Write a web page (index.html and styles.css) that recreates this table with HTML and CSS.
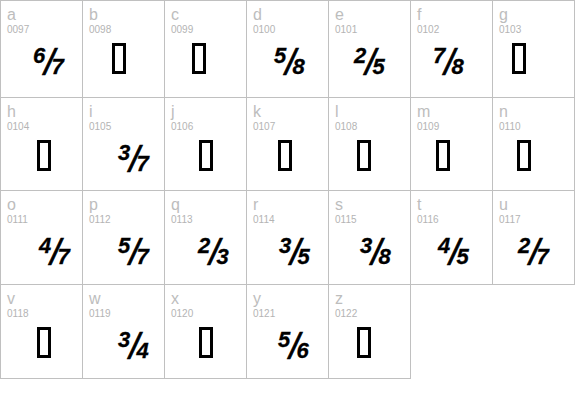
FILE: index.html
```html
<!DOCTYPE html>
<html>
<head>
<meta charset="utf-8">
<link rel="stylesheet" href="styles.css">
</head>
<body>
<div class="chart">
  <div class="cell"><div class="ch">a</div><div class="code">0097</div><div class="glyph x32"><span class="frac"><span class="n">6</span><span class="sl">/</span><span class="d">7</span></span></div></div>
  <div class="cell"><div class="ch">b</div><div class="code">0098</div><div class="glyph x29"><span class="nd"></span></div></div>
  <div class="cell"><div class="ch">c</div><div class="code">0099</div><div class="glyph x27"><span class="nd"></span></div></div>
  <div class="cell"><div class="ch">d</div><div class="code">0100</div><div class="glyph x27"><span class="frac"><span class="n">5</span><span class="sl">/</span><span class="d">8</span></span></div></div>
  <div class="cell"><div class="ch">e</div><div class="code">0101</div><div class="glyph x25"><span class="frac"><span class="n">2</span><span class="sl">/</span><span class="d">5</span></span></div></div>
  <div class="cell"><div class="ch">f</div><div class="code">0102</div><div class="glyph x22"><span class="frac"><span class="n">7</span><span class="sl">/</span><span class="d">8</span></span></div></div>
  <div class="cell"><div class="ch">g</div><div class="code">0103</div><div class="glyph x19"><span class="nd"></span></div></div>

  <div class="cell"><div class="ch">h</div><div class="code">0104</div><div class="glyph x36"><span class="nd"></span></div></div>
  <div class="cell"><div class="ch">i</div><div class="code">0105</div><div class="glyph x35"><span class="frac"><span class="n">3</span><span class="sl">/</span><span class="d">7</span></span></div></div>
  <div class="cell"><div class="ch">j</div><div class="code">0106</div><div class="glyph x34"><span class="nd"></span></div></div>
  <div class="cell"><div class="ch">k</div><div class="code">0107</div><div class="glyph x31"><span class="nd"></span></div></div>
  <div class="cell"><div class="ch">l</div><div class="code">0108</div><div class="glyph x28"><span class="nd"></span></div></div>
  <div class="cell"><div class="ch">m</div><div class="code">0109</div><div class="glyph x25"><span class="nd"></span></div></div>
  <div class="cell"><div class="ch">n</div><div class="code">0110</div><div class="glyph x24"><span class="nd"></span></div></div>

  <div class="cell"><div class="ch">o</div><div class="code">0111</div><div class="glyph x38"><span class="frac"><span class="n">4</span><span class="sl">/</span><span class="d">7</span></span></div></div>
  <div class="cell"><div class="ch">p</div><div class="code">0112</div><div class="glyph x35"><span class="frac"><span class="n">5</span><span class="sl">/</span><span class="d">7</span></span></div></div>
  <div class="cell"><div class="ch">q</div><div class="code">0113</div><div class="glyph x33"><span class="frac"><span class="n">2</span><span class="sl">/</span><span class="d">3</span></span></div></div>
  <div class="cell"><div class="ch">r</div><div class="code">0114</div><div class="glyph x32"><span class="frac"><span class="n">3</span><span class="sl">/</span><span class="d">5</span></span></div></div>
  <div class="cell"><div class="ch">s</div><div class="code">0115</div><div class="glyph x31"><span class="frac"><span class="n">3</span><span class="sl">/</span><span class="d">8</span></span></div></div>
  <div class="cell"><div class="ch">t</div><div class="code">0116</div><div class="glyph x27"><span class="frac"><span class="n">4</span><span class="sl">/</span><span class="d">5</span></span></div></div>
  <div class="cell"><div class="ch">u</div><div class="code">0117</div><div class="glyph x25"><span class="frac"><span class="n">2</span><span class="sl">/</span><span class="d">7</span></span></div></div>

  <div class="cell"><div class="ch">v</div><div class="code">0118</div><div class="glyph x36"><span class="nd"></span></div></div>
  <div class="cell"><div class="ch">w</div><div class="code">0119</div><div class="glyph x35"><span class="frac"><span class="n">3</span><span class="sl">/</span><span class="d">4</span></span></div></div>
  <div class="cell"><div class="ch">x</div><div class="code">0120</div><div class="glyph x34"><span class="nd"></span></div></div>
  <div class="cell"><div class="ch">y</div><div class="code">0121</div><div class="glyph x31"><span class="frac"><span class="n">5</span><span class="sl">/</span><span class="d">6</span></span></div></div>
  <div class="cell"><div class="ch">z</div><div class="code">0122</div><div class="glyph x28"><span class="nd"></span></div></div>
</div>
</body>
</html>
```

FILE: styles.css
```css
html, body {
  margin: 0;
  padding: 0;
  background: #ffffff;
}

body {
  font-family: "Liberation Sans", Arial, sans-serif;
}

.chart {
  display: grid;
  grid-template-columns: repeat(7, 82px);
  grid-template-rows: 97px 93px 94px 94px;
  width: max-content;
  border-top: 1px solid #c0c0c0;
  border-left: 1px solid #c0c0c0;
}

.cell {
  box-sizing: border-box;
  border-right: 1px solid #c0c0c0;
  border-bottom: 1px solid #c0c0c0;
  padding: 5px 0 0 6px;
  display: flex;
  flex-direction: column;
}

.ch {
  font-size: 16px;
  line-height: 17px;
  color: #bdbdbd;
}

.code {
  font-size: 10px;
  line-height: 14px;
  color: #b4b4b4;
}

.glyph {
  display: flex;
  align-items: flex-start;
  margin-top: 6px;
  margin-left: -6px;
}

.nd {
  display: block;
  box-sizing: border-box;
  width: 14px;
  height: 31px;
  border: 3px solid #000;
}

.frac {
  display: flex;
  align-items: flex-start;
  margin-top: 2px;
  font-family: "Liberation Sans", Arial, sans-serif;
  font-style: italic;
  font-weight: bold;
  font-size: 22px;
  line-height: 22px;
  color: #000;
}

.frac .n,
.frac .d {
  display: block;
  -webkit-text-stroke: 0.3px #000;
}

.frac .sl {
  display: block;
  font-weight: normal;
  font-style: italic;
  font-size: 37px;
  line-height: 37px;
  margin: -1px -3px 0 -1px;
  -webkit-text-stroke: 0.6px #000;
}

.frac .d {
  margin-top: 11px;
}

.x19 { padding-left: 19px; }
.x22 { padding-left: 22px; }
.x24 { padding-left: 24px; }
.x25 { padding-left: 25px; }
.x27 { padding-left: 27px; }
.x28 { padding-left: 28px; }
.x29 { padding-left: 29px; }
.x31 { padding-left: 31px; }
.x32 { padding-left: 32px; }
.x33 { padding-left: 33px; }
.x34 { padding-left: 34px; }
.x35 { padding-left: 35px; }
.x36 { padding-left: 36px; }
.x38 { padding-left: 38px; }
```
